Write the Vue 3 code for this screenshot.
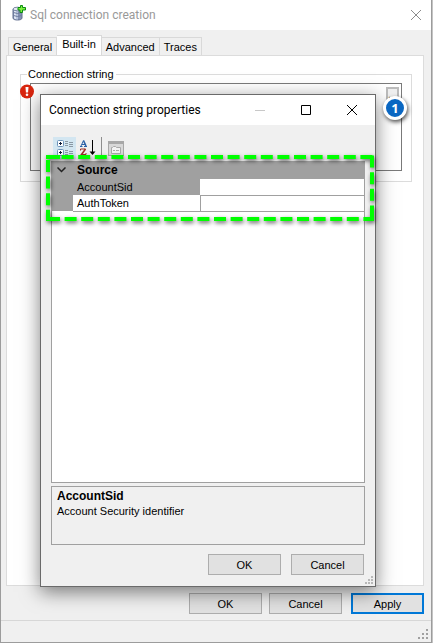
<script setup>
import { ref, reactive } from 'vue'

const tabs = ['General', 'Built-in', 'Advanced', 'Traces']
const activeTab = ref('Built-in')
const connection = ref('')

const properties = reactive([
  { name: 'AccountSid', value: '' },
  { name: 'AuthToken', value: '' }
])
const selected = ref('AccountSid')
</script>

<template>
  <main class="window">
    <header class="titlebar">
      <svg class="app-icon" width="14" height="16" viewBox="0 0 14 16" aria-hidden="true">
        <path d="M1 4v9c0 1.400 2 2 4.500 2s4.500-.6 4.500-2V4z" fill="#8492b4" stroke="#5f6c8e" />
        <path d="M2 5h2v9.300c-1.200-.2-2-.6-2-1.300z" fill="#dfe6f4" />
        <path d="M4 6h2v8.500H4z" fill="#b7c3dc" />
        <ellipse cx="5.500" cy="4" rx="4.500" ry="1.800" fill="#e2e7f2" stroke="#7c88a4" />
        <path d="M1.500 7.500q4 2 8 0M1.500 10.500q4 2 8 0" fill="none" stroke="#6d7a9c" />
        <path d="M8.500.5h2v2h3v2.500h-3v2.500h-2.500V5H6V2.500h2.500z" fill="#7cf03c" stroke="#0b8a12" />
      </svg>
      <h1>Sql connection creation</h1>
      <button class="caption" type="button" aria-label="Close">
        <svg width="12" height="12" viewBox="0 0 12 12"><path d="M1 1l10 10M11 1L1 11" stroke="#8c8c8c" fill="none" /></svg>
      </button>
    </header>

    <div class="body">
      <nav class="tabs" role="tablist">
        <button
          v-for="tab in tabs"
          :key="tab"
          type="button"
          role="tab"
          class="tab"
          :class="{ active: tab === activeTab }"
          :aria-selected="tab === activeTab"
          @click="activeTab = tab"
        >{{ tab }}</button>
      </nav>

      <section class="panel">
        <fieldset class="group">
          <legend><label for="connection">Connection string</label></legend>
          <textarea id="connection" v-model="connection"></textarea>
          <button class="browse" type="button" aria-label="Browse">...</button>
          <svg class="error" width="15" height="15" viewBox="0 0 15 15" aria-hidden="true">
            <circle cx="7" cy="7.500" r="7" fill="#d9260f" />
            <path d="M5.500 3h3l-.4 5.500H5.900z" fill="#fff" />
            <circle cx="7" cy="10.800" r="1.300" fill="#fff" />
          </svg>
          <span class="badge">1</span>
        </fieldset>
      </section>

      <div class="actions">
        <button class="push" type="button">OK</button>
        <button class="push" type="button">Cancel</button>
        <button class="push primary" type="button">Apply</button>
      </div>
    </div>

    <footer class="status">
      <svg width="12" height="12" viewBox="0 0 12 12" aria-hidden="true">
        <path d="M9 1h2v2H9zM5 5h2v2H5zM9 5h2v2H9zM1 9h2v2H1zM5 9h2v2H5zM9 9h2v2H9z" fill="#a0a0a0" />
      </svg>
    </footer>

    <section class="dialog" role="dialog" aria-labelledby="dialog-title">
      <header class="titlebar dialog-bar">
        <h2 id="dialog-title">Connection string properties</h2>
        <button class="caption" type="button" aria-label="Minimize" disabled>
          <svg width="12" height="12" viewBox="0 0 12 12"><path d="M1 6.500h10" stroke="#c8c8c8" fill="none" /></svg>
        </button>
        <button class="caption" type="button" aria-label="Maximize">
          <svg width="12" height="12" viewBox="0 0 12 12"><path d="M1.500 1.500h9v9h-9z" stroke="#000" fill="none" /></svg>
        </button>
        <button class="caption" type="button" aria-label="Close">
          <svg width="12" height="12" viewBox="0 0 12 12"><path d="M1 1l10 10M11 1L1 11" stroke="#000" fill="none" /></svg>
        </button>
      </header>

      <div class="dialog-body">
        <div class="toolbar">
          <button class="tool on" type="button" aria-label="Categorized">
            <svg width="16" height="16" viewBox="0 0 16 16">
              <g fill="#fff" stroke="#6d94bb">
                <rect x=".5" y=".5" width="6" height="6" rx="1" />
                <rect x=".5" y="9.500" width="6" height="6" rx="1" />
              </g>
              <path d="M2 3.500h3M3.500 2v3M2 12.500h3M3.500 11v3" stroke="#101c38" />
              <path d="M8 1.500h3M8 3.500h3M8 5.500h3M8 10.500h3M8 12.500h3M8 14.500h3M12 2.500h4M12 4.500h4M12 6.500h4M12 11.500h4M12 13.500h4M12 15.500h4" stroke="#8a98a4" />
            </svg>
          </button>
          <button class="tool" type="button" aria-label="Alphabetical">
            <svg width="16" height="16" viewBox="0 0 16 16" aria-hidden="true">
              <path d="M0 6.500h2.500M4 6.500h3M1 6l2.500-5.500M2 4.500h3" stroke="#2b62a8" fill="none" />
              <path d="M3.500.5L6 6" stroke="#2b62a8" stroke-width="1.600" fill="none" />
              <path d="M.5 10.500v-1.500h5M.5 14.500h5.500v-1.500" stroke="#9c3328" fill="none" />
              <path d="M5.500 9L1.500 14.500" stroke="#9c3328" stroke-width="1.600" fill="none" />
              <path d="M12.500 0v12" stroke="#000" fill="none" />
              <path d="M9.500 11.500h6l-3 3.500z" fill="#000" />
            </svg>
          </button>
          <span class="separator"></span>
          <button class="tool" type="button" aria-label="Property pages" disabled>
            <svg width="16" height="15" viewBox="0 0 16 15">
              <rect x=".5" y=".5" width="15" height="14" fill="#d8d8d8" stroke="#a8a8a8" />
              <path d="M1 2h14" stroke="#a8a8a8" stroke-width="2" />
              <path d="M3.500 12.500v-6h1l1-1h2l1 1h4v6z" fill="#f2f2f2" stroke="#a8a8a8" />
              <path d="M5 9.500h2M8 9.500h3" stroke="#a8a8a8" />
            </svg>
          </button>
        </div>

        <div class="grid">
          <table>
            <colgroup><col class="gutter" /><col class="names" /><col /></colgroup>
            <tbody>
              <tr class="category">
                <td>
                  <svg width="9" height="6" viewBox="0 0 9 6"><path d="M.5.5l4 4 4-4" fill="none" stroke="#222" stroke-width="1.500" /></svg>
                </td>
                <th colspan="2" scope="rowgroup">Source</th>
              </tr>
              <tr
                v-for="p in properties"
                :key="p.name"
                class="property"
                :class="{ selected: p.name === selected }"
              >
                <td></td>
                <th scope="row"><label :for="p.name">{{ p.name }}</label></th>
                <td class="value"><input :id="p.name" v-model="p.value" type="text" @focus="selected = p.name" /></td>
              </tr>
            </tbody>
          </table>
        </div>

        <div class="help">
          <strong>{{ selected }}</strong>
          <p>Account Security identifier</p>
        </div>

        <div class="dialog-actions">
          <button class="push" type="button">OK</button>
          <button class="push" type="button">Cancel</button>
        </div>
      </div>

      <svg class="grip" width="9" height="9" viewBox="0 0 9 9" aria-hidden="true">
        <path d="M6 0h2v2H6zM3 3h2v2H3zM6 3h2v2H6zM0 6h2v2H0zM3 6h2v2H3zM6 6h2v2H6z" fill="#b8b8b8" />
      </svg>

      <div class="highlight">
        <svg width="100%" height="100%" aria-hidden="true">
          <g stroke="#00ff00" stroke-width="4" stroke-dasharray="12 4.600">
            <line x1="0" y1="2" x2="100%" y2="2" stroke-dashoffset="1" />
            <line x1="0" y1="64" x2="100%" y2="64" stroke-dashoffset="-2" />
            <line x1="2" y1="5" x2="2" y2="66" />
            <svg x="100%" class="edge"><line x1="-2" y1="0" x2="-2" y2="66" stroke-dashoffset="-.6" /></svg>
          </g>
          <path d="M0 2h14M0 64h14" stroke="#00ff00" stroke-width="4" fill="none" />
        </svg>
      </div>
    </section>
  </main>
</template>

<style>
body {
  background: #c4c4c4;
}
</style>

<style scoped>
* {
  box-sizing: border-box;
}

.window {
  position: relative;
  display: flex;
  flex-direction: column;
  min-height: 100vh;
  margin-right: 1px;
  border: 1px solid #9c9c9c;
  border-top: 0;
  background: #f0f0f0;
  color: #000;
  font: 11px/14px "Liberation Sans", Arial, sans-serif;
}

button,
input,
textarea {
  margin: 0;
  padding: 0;
  border: 0;
  font: inherit;
  color: inherit;
}

svg {
  display: block;
}

.titlebar {
  display: flex;
  align-items: center;
  height: 30px;
  padding: 0 9px 0 11px;
  background: #fff;
}

.titlebar h1,
.titlebar h2 {
  flex: 1;
  margin: 0;
  font: 12px/16px Roboto, "Noto Sans", sans-serif;
  white-space: nowrap;
}

.titlebar h1 {
  padding-left: 4px;
  color: #999;
}

.app-icon {
  margin-bottom: 4px;
}

.caption {
  display: flex;
  background: none;
}

.body {
  display: flex;
  flex: 1;
  flex-direction: column;
  padding: 5px 7px 6px 5px;
}

.tabs {
  display: flex;
  align-items: flex-end;
  height: 21px;
  padding-left: 2px;
  margin-bottom: -1px;
}

.tab {
  height: 19px;
  padding: 0 4px;
  border: 1px solid #d9d9d9;
  border-left-width: 0;
  background: #f0f0f0;
}

.tab:first-child {
  border-left-width: 1px;
}

.tab.active {
  height: 21px;
  padding: 0 5px 3px;
  border-bottom-color: #fff;
  background: #fff;
}

.panel {
  flex: 1;
  padding: 11px 11px 0 13px;
  border: 1px solid #dcdcdc;
  background: #fff;
}

.group {
  position: relative;
  min-width: 0;
  margin: 0;
  padding: 2px 9px 10px;
  border: 1px solid #dcdcdc;
}

.group legend {
  margin-left: -3px;
  padding: 0 2px 0 1px;
}

.group textarea {
  display: block;
  width: 100%;
  height: 88px;
  border: 1px solid #7a7a7a;
  background: #fff;
  resize: none;
}

.browse {
  position: absolute;
  top: 6px;
  right: 12px;
  width: 13px;
  height: 14px;
  border: 2px solid #bcbcbc;
  background: #f0f0f0;
  line-height: 8px;
}

.error {
  position: absolute;
  top: 3px;
  left: -1px;
}

.badge {
  position: absolute;
  z-index: 3;
  top: 15px;
  right: 4px;
  width: 24px;
  height: 24px;
  border: 3px solid #fff;
  border-radius: 50%;
  background: #0a67c2;
  box-shadow: 1px 2px 4px rgba(0, 0, 0, 0.7);
  color: #fff;
  font: bold 13px/18px "Open Sans", sans-serif;
  text-align: center;
}

.actions {
  display: flex;
  justify-content: flex-end;
  gap: 7px;
  padding-top: 7px;
}

.primary {
  margin-left: 2px;
}

.push {
  width: 73px;
  height: 21px;
  border: 1px solid #adadad;
  background: #e1e1e1;
}

.push.primary {
  border: 2px solid #0078d7;
}

.status {
  display: flex;
  align-items: flex-end;
  justify-content: flex-end;
  height: 22px;
  padding: 0 2px 2px 0;
  border-top: 1px solid #d7d7d7;
}

.dialog {
  position: absolute;
  z-index: 2;
  top: 94px;
  right: 55px;
  bottom: 55px;
  left: 39px;
  display: flex;
  flex-direction: column;
  border: 1px solid #6a6a6a;
  background: #f0f0f0;
  box-shadow: 0 5px 18px rgba(0, 0, 0, 0.5);
}

.dialog-bar {
  gap: 34px;
  padding: 0 17px 0 8px;
}

.dialog-body {
  display: flex;
  flex: 1;
  flex-direction: column;
  padding: 12px 10px 11px;
}

.toolbar {
  display: flex;
  align-items: flex-start;
  height: 24px;
  padding-left: 2px;
}

.tool {
  display: flex;
  align-items: center;
  justify-content: center;
  width: 23px;
  height: 22px;
  background: none;
}

.tool.on {
  background: #d3e6f1;
}

.separator {
  width: 1px;
  height: 20px;
  margin: 0 2px;
  background: #8e8e8e;
}

.grid {
  flex: 1;
  border: 1px solid #a0a0a0;
  border-top: 0;
  background: #fff;
}

table {
  width: 100%;
  border-collapse: collapse;
  table-layout: fixed;
}

.gutter {
  width: 21px;
}

.names {
  width: 127px;
}

th,
td {
  height: 16px;
  padding: 0;
  background: #a0a0a0;
  text-align: left;
}

th {
  padding-left: 4px;
}

.category th,
.category td {
  height: 18px;
  font-size: 12px;
}

.category td {
  padding-left: 5px;
}

.property th {
  font-weight: normal;
  line-height: 14px;
}

.property:not(.selected) th {
  border-right: 1px solid #a0a0a0;
}

.property:not(.selected) th,
.property .value {
  border-bottom: 1px solid #a0a0a0;
  background: #fff;
}

.value input {
  display: block;
  width: 100%;
  height: 14px;
  outline: 0;
  background: transparent;
}

.help {
  height: 59px;
  margin-top: 3px;
  padding: 2px 5px;
  border: 1px solid #a0a0a0;
}

.help strong {
  display: block;
  font-size: 12px;
  line-height: 15px;
}

.help p {
  margin: 0;
  line-height: 15px;
}

.dialog-actions {
  display: flex;
  justify-content: flex-end;
  gap: 10px;
  padding: 9px 1px 0 0;
}

.grip {
  position: absolute;
  right: 1px;
  bottom: 1px;
}

.highlight {
  position: absolute;
  top: 60px;
  right: 1px;
  left: 5px;
  height: 66px;
  pointer-events: none;
  filter: drop-shadow(1px 2px 2px rgba(0, 0, 0, 0.6));
}

.edge {
  overflow: visible;
}
</style>
